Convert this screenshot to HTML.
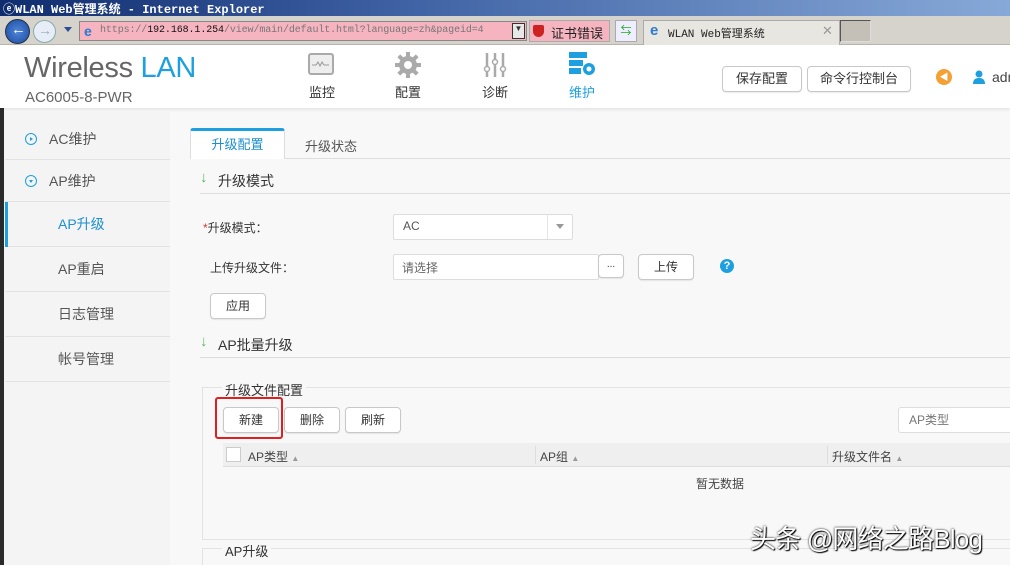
<!DOCTYPE html>
<html><head><meta charset="utf-8"><style>
*{margin:0;padding:0;box-sizing:border-box}
body{width:1010px;height:565px;overflow:hidden;position:relative;background:#f8f8f8;font-family:"Liberation Sans","Noto Sans CJK SC",sans-serif;font-size:13px;color:#333}
.a{position:absolute}
.btn{position:absolute;background:#fff;border:1px solid #c8c8c8;border-radius:4px;text-align:center;font-size:12px;color:#333;box-shadow:0 1px 1px rgba(0,0,0,.08)}
.nav{position:absolute;top:52px;width:60px;text-align:center;font-size:13px;color:#333}
.side{position:absolute;left:5px;width:165px;border-bottom:1px solid #e2e2e2;font-size:14px;color:#555}
</style></head><body>
<!-- title bar -->
<div class="a" style="left:0;top:0;width:1010px;height:16px;background:linear-gradient(90deg,#0f2c6e,#3f62a4 40%,#87a9d8)"></div>
<div class="a" style="left:3px;top:0px;font:bold 12px 'Liberation Mono','Noto Sans CJK SC',monospace;color:#fff">ⓔWLAN Web管理系统 - Internet Explorer</div>
<!-- address row -->
<div class="a" style="left:0;top:16px;width:1010px;height:29px;background:#d6d3cc;border-bottom:1px solid #b8b4ac"></div>
<div class="a" style="left:5px;top:19px;width:25px;height:25px;border-radius:50%;background:radial-gradient(#4f86d8,#1b4aa0);border:1px solid #234"></div>
<div class="a" style="left:11px;top:21px;color:#fff;font-size:15px;font-weight:bold">←</div>
<div class="a" style="left:33px;top:20px;width:23px;height:23px;border-radius:50%;background:#e6edf6;border:1px solid #8aa"></div>
<div class="a" style="left:38px;top:22px;color:#9ab;font-size:14px">→</div>
<div class="a" style="left:64px;top:27px;width:0;height:0;border:4px solid transparent;border-top:5px solid #2a4f90"></div>
<div class="a" style="left:79px;top:21px;width:448px;height:20px;background:#f6b4c0;border:1px solid #888"></div>
<div class="a" style="left:84px;top:23px;color:#2a7bd0;font-size:14px;font-weight:bold">e</div>
<div class="a" style="left:100px;top:25px;font:10px 'Liberation Mono',monospace;color:#777;letter-spacing:-.1px">https://<span style="color:#111">192.168.1.254</span>/view/main/default.html?language=zh&amp;pageid=4</div>
<div class="a" style="left:512px;top:23px;width:13px;height:16px;background:#e8e8e8;border:1px solid #333;font-size:8px;text-align:center">▼</div>
<div class="a" style="left:529px;top:20px;width:81px;height:22px;background:#f6b4c0;border:1px solid #aaa"></div>
<div class="a" style="left:533px;top:25px;width:11px;height:12px;background:#c22;border-radius:2px 2px 6px 6px"></div>
<div class="a" style="left:551px;top:23px;font-size:13px;color:#222">证书错误</div>
<div class="a" style="left:615px;top:20px;width:22px;height:22px;background:#eef;border:1px solid #aaa;color:#2a2;font-size:11px;text-align:center;line-height:20px">⇆</div>
<div class="a" style="left:643px;top:20px;width:197px;height:25px;background:#e8e6e0;border:1px solid #aaa;border-bottom:none"></div>
<div class="a" style="left:650px;top:22px;color:#2a7bd0;font-size:15px;font-weight:bold">e</div>
<div class="a" style="left:668px;top:25px;font:11px 'Liberation Mono','Noto Sans CJK SC',monospace;color:#222">WLAN Web管理系统</div>
<div class="a" style="left:822px;top:23px;color:#999;font-size:13px">✕</div>
<div class="a" style="left:840px;top:20px;width:31px;height:22px;background:#c4c0b8;border:1px solid #555;border-bottom-color:#ddd;border-right-color:#ddd"></div>
<!-- header -->
<div class="a" style="left:0;top:45px;width:1010px;height:63px;background:#fff;box-shadow:0 2px 3px rgba(0,0,0,.08)"></div>
<div class="a" style="left:24px;top:52px;font-size:29px;color:#666;letter-spacing:-.3px">Wireless <span style="color:#1ea0e0">LAN</span></div>
<div class="a" style="left:25px;top:89px;font-size:15px;color:#666">AC6005-8-PWR</div>
<svg class="a" style="left:308px;top:53px" width="26" height="24"><rect x="1" y="1" width="24" height="20" rx="2" fill="#eee" stroke="#aaa" stroke-width="2"/><path d="M4 12h4l2-3 2 4 2-4 2 3h5" fill="none" stroke="#999" stroke-width="1"/></svg>
<div class="nav" style="left:292px;top:82px">监控</div>
<svg class="a" style="left:395px;top:52px" width="26" height="26" viewBox="0 0 26 26"><g fill="#aaa"><circle cx="13" cy="13" r="9"/><rect x="11" y="0" width="4" height="26"/><rect x="0" y="11" width="26" height="4"/><rect x="11" y="0" width="4" height="26" transform="rotate(45 13 13)"/><rect x="11" y="0" width="4" height="26" transform="rotate(-45 13 13)"/></g><circle cx="13" cy="13" r="4" fill="#fff"/></svg>
<div class="nav" style="left:378px;top:82px">配置</div>
<svg class="a" style="left:483px;top:52px" width="24" height="26"><g stroke="#aaa" stroke-width="2.5"><path d="M4 1v24M12 1v24M20 1v24"/></g><g fill="#fff" stroke="#aaa" stroke-width="1.5"><circle cx="4" cy="17" r="2.5"/><circle cx="12" cy="10" r="2.5"/><circle cx="20" cy="17" r="2.5"/></g></svg>
<div class="nav" style="left:465px;top:82px">诊断</div>
<svg class="a" style="left:569px;top:52px" width="28" height="26"><g fill="#1ea0e0"><rect x="0" y="0" width="18" height="6"/><rect x="0" y="8" width="14" height="6"/><rect x="0" y="16" width="12" height="6"/><circle cx="20" cy="17" r="6"/></g><circle cx="20" cy="17" r="2.5" fill="#fff"/></svg>
<div class="nav" style="left:552px;top:82px;color:#1ea0e0">维护</div>
<div class="btn" style="left:722px;top:66px;width:80px;height:26px;line-height:24px;font-size:13px">保存配置</div>
<div class="btn" style="left:807px;top:66px;width:104px;height:26px;line-height:24px;font-size:13px">命令行控制台</div>
<div class="a" style="left:936px;top:69px;width:16px;height:16px;border-radius:50%;background:#f5a033;color:#fff;font-size:9px;text-align:center;line-height:16px">◀</div>
<svg class="a" style="left:973px;top:70px" width="12" height="14"><circle cx="6" cy="4" r="3.5" fill="#1ea0e0"/><path d="M0 14c0-5 3-6 6-6s6 1 6 6z" fill="#1ea0e0"/></svg>
<div class="a" style="left:992px;top:69px;font-size:14px;color:#444">adm</div>
<!-- left dark frame -->
<div class="a" style="left:0;top:108px;width:4px;height:457px;background:#2a2a2a"></div>
<!-- sidebar -->
<div class="a" style="left:4px;top:112px;width:166px;height:453px;background:#f4f4f4"></div>
<div class="side" style="top:118px;height:42px;line-height:42px;padding-left:44px">AC维护</div>
<div class="a" style="left:25px;top:133px;width:12px;height:12px;border:1.5px solid #1ea0e0;border-radius:50%"></div><div class="a" style="left:30px;top:137px;border:2.5px solid transparent;border-left:3.5px solid #1ea0e0"></div>
<div class="side" style="top:160px;height:42px;line-height:42px;padding-left:44px">AP维护</div>
<div class="a" style="left:25px;top:175px;width:12px;height:12px;border:1.5px solid #1ea0e0;border-radius:50%"></div><div class="a" style="left:28.5px;top:180px;border:2.5px solid transparent;border-top:3.5px solid #1ea0e0"></div>
<div class="side" style="top:202px;height:45px;line-height:45px;padding-left:53px;color:#1e8fd0">AP升级</div>
<div class="a" style="left:5px;top:202px;width:3px;height:45px;background:#1ea0e0"></div>
<div class="side" style="top:247px;height:45px;line-height:45px;padding-left:53px">AP重启</div>
<div class="side" style="top:292px;height:45px;line-height:45px;padding-left:53px">日志管理</div>
<div class="side" style="top:337px;height:45px;line-height:45px;padding-left:53px">帐号管理</div>
<!-- tabs -->
<div class="a" style="left:190px;top:158px;width:820px;height:1px;background:#ddd"></div>
<div class="a" style="left:190px;top:128px;width:95px;height:31px;background:#fff;border:1px solid #ddd;border-top:3px solid #1ea0e0;border-bottom:none;border-radius:3px 3px 0 0;text-align:center;line-height:28px;font-size:13px;color:#1e8fd0">升级配置</div>
<div class="a" style="left:305px;top:136px;font-size:13px;color:#555">升级状态</div>
<!-- section 1 -->
<div class="a" style="left:200px;top:169px;color:#5cb85c;font-size:15px">↓</div>
<div class="a" style="left:218px;top:171px;font-size:14px;color:#333">升级模式</div>
<div class="a" style="left:200px;top:193px;width:810px;height:1px;background:#ddd"></div>
<div class="a" style="left:203px;top:219px;font-size:12px;color:#333"><span style="color:#d33">*</span>升级模式：</div>
<div class="a" style="left:393px;top:214px;width:180px;height:26px;background:#fff;border:1px solid #ddd;border-radius:2px"></div>
<div class="a" style="left:403px;top:219px;font-size:12px;color:#555">AC</div>
<div class="a" style="left:547px;top:215px;width:1px;height:24px;background:#e4e4e4"></div>
<div class="a" style="left:556px;top:224px;border:4px solid transparent;border-top:5px solid #999"></div>
<div class="a" style="left:210px;top:259px;font-size:12px;color:#333">上传升级文件：</div>
<div class="a" style="left:393px;top:254px;width:206px;height:26px;background:#fff;border:1px solid #ddd;border-radius:2px"></div>
<div class="a" style="left:402px;top:259px;font-size:12px;color:#666">请选择</div>
<div class="btn" style="left:598px;top:254px;width:26px;height:24px;line-height:20px;font-size:10px">...</div>
<div class="btn" style="left:638px;top:254px;width:56px;height:26px;line-height:24px">上传</div>
<div class="a" style="left:720px;top:259px;width:14px;height:14px;border-radius:50%;background:#1ea0e0;color:#fff;font-size:11px;font-weight:bold;text-align:center;line-height:14px">?</div>
<div class="btn" style="left:210px;top:293px;width:56px;height:26px;line-height:24px">应用</div>
<!-- section 2 -->
<div class="a" style="left:200px;top:333px;color:#5cb85c;font-size:15px">↓</div>
<div class="a" style="left:218px;top:335px;font-size:14px;color:#333">AP批量升级</div>
<div class="a" style="left:200px;top:357px;width:810px;height:1px;background:#ddd"></div>
<div class="a" style="left:202px;top:387px;width:808px;height:153px;border:1px solid #e2e2e2;border-right:none"></div>
<div class="a" style="left:222px;top:380px;padding:0 3px;background:#f8f8f8;font-size:13px;color:#333">升级文件配置</div>
<div class="btn" style="left:223px;top:407px;width:56px;height:26px;line-height:24px">新建</div>
<div class="a" style="left:215px;top:397px;width:68px;height:42px;border:2px solid #e02020;border-radius:3px"></div>
<div class="btn" style="left:284px;top:407px;width:56px;height:26px;line-height:24px">删除</div>
<div class="btn" style="left:345px;top:407px;width:56px;height:26px;line-height:24px">刷新</div>
<div class="a" style="left:898px;top:407px;width:112px;height:26px;background:#fff;border:1px solid #ddd;border-right:none;border-radius:3px 0 0 3px;padding-left:10px;line-height:24px;font-size:12px;color:#777">AP类型</div>
<div class="a" style="left:223px;top:443px;width:787px;height:24px;background:#efefef;border-bottom:1px solid #ddd"></div>
<div class="a" style="left:226px;top:447px;width:15px;height:15px;background:#fff;border:1px solid #ccc"></div>
<div class="a" style="left:248px;top:448px;font-size:12px;color:#444">AP类型 <span style="font-size:8px;color:#999">▲</span></div>
<div class="a" style="left:535px;top:446px;width:1px;height:18px;background:#ddd"></div>
<div class="a" style="left:540px;top:448px;font-size:12px;color:#444">AP组 <span style="font-size:8px;color:#999">▲</span></div>
<div class="a" style="left:827px;top:446px;width:1px;height:18px;background:#ddd"></div>
<div class="a" style="left:832px;top:448px;font-size:12px;color:#444">升级文件名 <span style="font-size:8px;color:#999">▲</span></div>
<div class="a" style="left:696px;top:475px;font-size:12px;color:#444">暂无数据</div>
<div class="a" style="left:202px;top:548px;width:808px;height:17px;border-top:1px solid #e2e2e2;border-left:1px solid #e2e2e2"></div>
<div class="a" style="left:222px;top:541px;padding:0 3px;background:#f8f8f8;font-size:13px;color:#333">AP升级</div>
<div class="a" style="left:750px;top:519px;font-size:26px;color:#fff;text-shadow:0 0 2px #000,1px 1px 1px #000;letter-spacing:-.8px">头条 @网络之路Blog</div>
</body></html>
